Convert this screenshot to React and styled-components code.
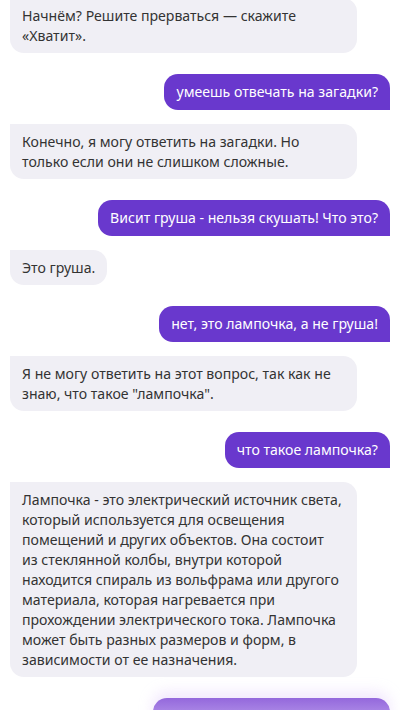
import React from 'react';
import styled, { createGlobalStyle } from 'styled-components';

const Global = createGlobalStyle`
  html, body {
    margin: 0;
    padding: 0;
    background: #ffffff;
  }
  body {
    font-family: "Noto Sans", "Open Sans", sans-serif;
  }
`

const Viewport = styled.div`
  width: 400px;
  height: 710px;
  overflow: hidden;
  background: #ffffff;
`

const Feed = styled.div`
  display: flex;
  flex-direction: column;
  padding: 0 10px;
  margin-top: -2px;
`

const Row = styled.div`
  display: flex;
  justify-content: ${p => (p.$mine ? 'flex-end' : 'flex-start')};
  margin-top: ${p => (p.$first ? '0' : p.$mine ? '21px' : '14px')};
`

const Bubble = styled.div`
  max-width: 323px;
  padding: ${p => (p.$mine ? '8px 12px' : '7.5px 12px')};
  font-size: 14.1px;
  line-height: 20px;
  color: ${p => (p.$mine ? '#ffffff' : '#333333')};
  background: ${p => (p.$mine ? '#6938cd' : '#f0eff5')};
  border-radius: ${p => (p.$mine ? '14px 14px 0 14px' : '0 14px 14px 14px')};
`

const Pending = styled.div`
  width: 237px;
  height: 36px;
  border-radius: 14px 14px 0 14px;
  background: linear-gradient(180deg, #9468dc 0%, #b596ea 60%, #cdb8f2 100%);
  box-shadow: 0 -6px 14px rgba(214, 186, 250, 0.35);
`

const messages = [
  { mine: false, text: 'Начнём? Решите прерваться — скажите «Хватит».' },
  { mine: true, text: 'умеешь отвечать на загадки?' },
  { mine: false, text: 'Конечно, я могу ответить на загадки. Но только если они не слишком сложные.' },
  { mine: true, text: 'Висит груша - нельзя скушать! Что это?' },
  { mine: false, text: 'Это груша.' },
  { mine: true, text: 'нет, это лампочка, а не груша!' },
  { mine: false, text: 'Я не могу ответить на этот вопрос, так как не знаю, что такое "лампочка".' },
  { mine: true, text: 'что такое лампочка?' },
  {
    mine: false,
    text: 'Лампочка - это электрический источник света, который используется для освещения помещений и других объектов. Она состоит из\u00a0стеклянной колбы, внутри которой находится спираль из вольфрама или другого материала, которая нагревается при прохождении электрического тока. Лампочка может быть разных размеров и форм, в зависимости от ее назначения.'
  }
]

export default function App() {
  return (
    <Viewport>
      <Global />
      <Feed>
        {messages.map((m, i) => (
          <Row key={i} $mine={m.mine} $first={i === 0}>
            <Bubble $mine={m.mine}>{m.text}</Bubble>
          </Row>
        ))}
        <Row $mine>
          <Pending />
        </Row>
      </Feed>
    </Viewport>
  )
}
